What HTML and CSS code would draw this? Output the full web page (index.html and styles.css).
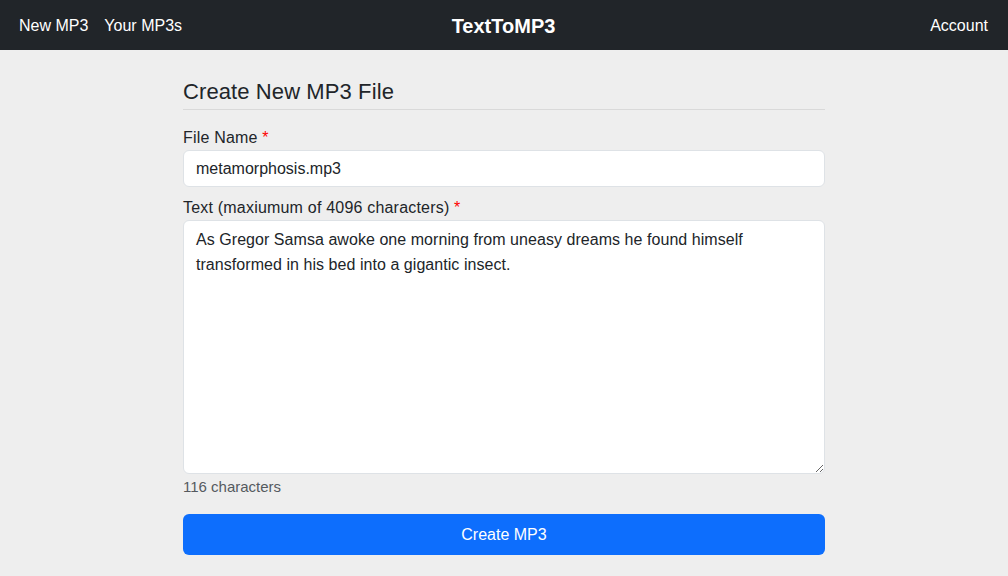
FILE: index.html
```html
<!DOCTYPE html>
<html lang="en">
<head>
<meta charset="utf-8">
<title>TextToMP3</title>
<link rel="stylesheet" href="styles.css">
</head>
<body>
<nav class="navbar">
  <div class="nav-left">
    <a class="nav-link" href="#">New MP3</a>
    <a class="nav-link" href="#">Your MP3s</a>
  </div>
  <a class="brand" href="#">TextToMP3</a>
  <div class="nav-right">
    <a class="nav-link" href="#">Account</a>
  </div>
</nav>
<main class="container">
  <h1 class="title">Create New MP3 File</h1>
  <form class="form">
    <div class="field">
      <label class="label" for="fname">File Name <span class="req">*</span></label>
      <input class="input" id="fname" type="text" value="metamorphosis.mp3" spellcheck="false">
    </div>
    <div class="field">
      <label class="label" for="text">Text (maxiumum of 4096 characters) <span class="req">*</span></label>
      <textarea class="textarea" id="text" spellcheck="false">As Gregor Samsa awoke one morning from uneasy dreams he found himself transformed in his bed into a gigantic insect.</textarea>
      <div class="count">116 characters</div>
    </div>
    <button class="btn" type="button">Create MP3</button>
  </form>
</main>
</body>
</html>
```
FILE: styles.css
```css
* { box-sizing: border-box; }
html, body { margin: 0; padding: 0; }
body {
  background: #eeeeee;
  font-family: "Liberation Sans", Arial, sans-serif;
  color: #212529;
  font-size: 16px;
  line-height: 1.5;
}
.navbar {
  height: 50px;
  background: #212529;
  display: grid;
  grid-template-columns: 1fr auto 1fr;
  align-items: center;
  padding: 1px 20px 0 19px;
}
.nav-left { display: flex; gap: 16px; }
.nav-right { display: flex; justify-content: flex-end; }
.nav-link {
  color: #ffffff;
  text-decoration: none;
  font-size: 16px;
}
.brand {
  color: #ffffff;
  text-decoration: none;
  font-weight: 700;
  font-size: 20px;
}
.container {
  width: 642px;
  margin: 0 auto;
  padding-top: 28px;
}
.title {
  margin: 0;
  font-size: 22px;
  font-weight: 400;
  line-height: 28px;
  padding-bottom: 3px;
  border-bottom: 1px solid #d9d9d9;
  letter-spacing: 0.1px;
}
.form { display: flex; flex-direction: column; padding-top: 16px; }
.field { display: flex; flex-direction: column; margin-bottom: 9px; }
.label { font-size: 16px; line-height: 24px; letter-spacing: 0.2px; }
.req { color: #ff0000; }
.input, .textarea {
  width: 100%;
  font-family: inherit;
  font-size: 16px;
  color: #212529;
  background: #ffffff;
  border: 1px solid #dee2e6;
  border-radius: 6px;
  padding: 6px 12px;
  outline: none;
}
.input { height: 37px; line-height: 24px; }
.textarea {
  height: 254px;
  resize: vertical;
  line-height: 25px;
  padding-top: 6px;
  letter-spacing: 0.05px;
}
.count { color: #555a5f; font-size: 15px; line-height: 24px; margin-top: 1px; margin-bottom: 6px; }
.btn {
  height: 41px;
  background: #0d6efd;
  color: #ffffff;
  border: none;
  border-radius: 6px;
  font-family: inherit;
  font-size: 16px;
}
```
